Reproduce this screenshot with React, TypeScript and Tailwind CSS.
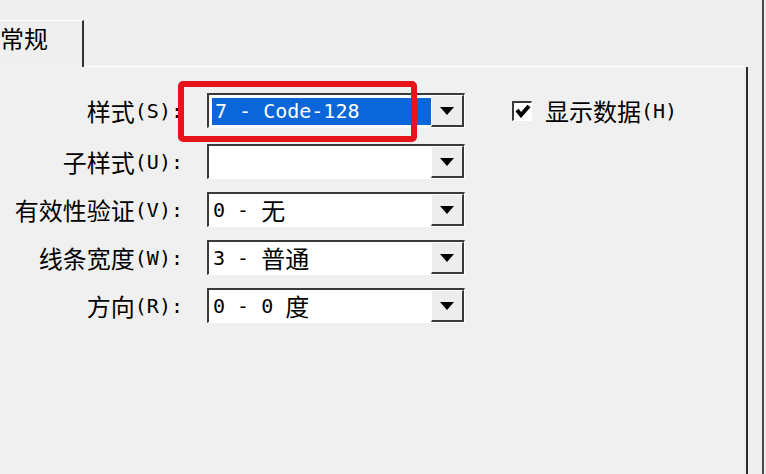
import React from 'react';

const rows = [
    { label: '样式(S):', value: '7 - Code-128', selected: true },
    { label: '子样式(U):', value: '' },
    { label: '有效性验证(V):', value: '0 - 无' },
    { label: '线条宽度(W):', value: '3 - 普通' },
    { label: '方向(R):', value: '0 - 0 度' },
];

// ASCII runs go half-width (mono), CJK runs full-width
const Mixed = ({ text }: { text: string }) => {
    const parts = text.match(/[\x00-\x7f]+|[^\x00-\x7f]+/g) || [];
    return (
        <>
            {parts.map((p, i) =>
                /^[\x00-\x7f]/.test(p) ? (
                    <span key={i} className="font-['DejaVu_Sans_Mono',monospace] text-[20px] leading-none whitespace-pre">
                        {p}
                    </span>
                ) : (
                    <span key={i} className="font-['Noto_Sans_CJK_SC',sans-serif] text-[24px] leading-none whitespace-pre">
                        {p}
                    </span>
                )
            )}
        </>
    );
};

const Arrow = () => (
    <svg width="14" height="8" viewBox="0 0 14 8">
        <polygon points="0,0 14,0 7,8" fill="#000" />
    </svg>
);

const Combo = ({ value, selected }: { value: string; selected?: boolean }) => (
    <div className="flex h-[35px] w-[258px] border-t-2 border-l-2 border-t-[#3a3a3a] border-l-[#3a3a3a] border-b border-r border-b-white border-r-white bg-white">
        <div className="flex flex-1 items-center pl-[3px] text-black">
            {selected ? (
                <div className="flex h-[27px] w-full items-center bg-[#0b66d9] pl-[3px] text-white">
                    <Mixed text={value} />
                </div>
            ) : (
                <div className="flex items-center pl-[1px]">
                    <Mixed text={value} />
                </div>
            )}
        </div>
        <div className="flex w-[33px] items-center justify-center border-t border-l border-t-white border-l-white border-r-2 border-b-2 border-r-[#3a3a3a] border-b-[#3a3a3a] bg-[#ededed]">
            <Arrow />
        </div>
    </div>
);

const App = () => {
    return (
        <div className="relative flex h-[474px] w-[766px] overflow-hidden bg-[#efefef] text-black">
            <div className="flex w-[748px] flex-col">
                <div className="flex h-[67px]">
                    <div className="mt-[20px] w-[84px] border-t border-t-white border-r-2 border-r-[#333]">
                        <div className="pt-[5px]">
                            <Mixed text="常规" />
                        </div>
                    </div>
                    <div className="flex-1 border-b border-b-white" />
                </div>
                <div className="flex-1 border-r-2 border-r-[#2b2b2b] bg-[#f0f0f0] pt-[26px]">
                    {rows.map((r, i) => (
                        <div key={i} className={`flex items-center ${i === 0 ? 'mb-[16px]' : 'mb-[13px]'}`}>
                            <div className="flex w-[183px] items-center justify-end">
                                <Mixed text={r.label} />
                            </div>
                            <div className="ml-[24px]">
                                <Combo value={r.value} selected={r.selected} />
                            </div>
                            {i === 0 && (
                                <div className="ml-[47px] flex items-center">
                                    <div className="flex h-[20px] w-[20px] items-center justify-center border-t-2 border-l-2 border-t-[#3a3a3a] border-l-[#3a3a3a] border-b border-r border-b-white border-r-white bg-white">
                                        <svg width="16" height="14" viewBox="0 0 16 14">
                                            <polyline points="2,6 6,11 14,2" fill="none" stroke="#000" strokeWidth="4" strokeLinejoin="miter" />
                                        </svg>
                                    </div>
                                    <div className="ml-[13px] flex items-center">
                                        <Mixed text="显示数据(H)" />
                                    </div>
                                </div>
                            )}
                        </div>
                    ))}
                </div>
            </div>
            <div className="w-[14px]" />
            <div className="w-[2px] bg-[#4a4a4a]" />
            <div className="flex-1" />
            {/* red annotation box */}
            <div className="absolute left-[178px] top-[81px] h-[61px] w-[239px] rounded-[5px] border-[6px] border-[#e8141b]" />
        </div>
    );
};

export default App;
